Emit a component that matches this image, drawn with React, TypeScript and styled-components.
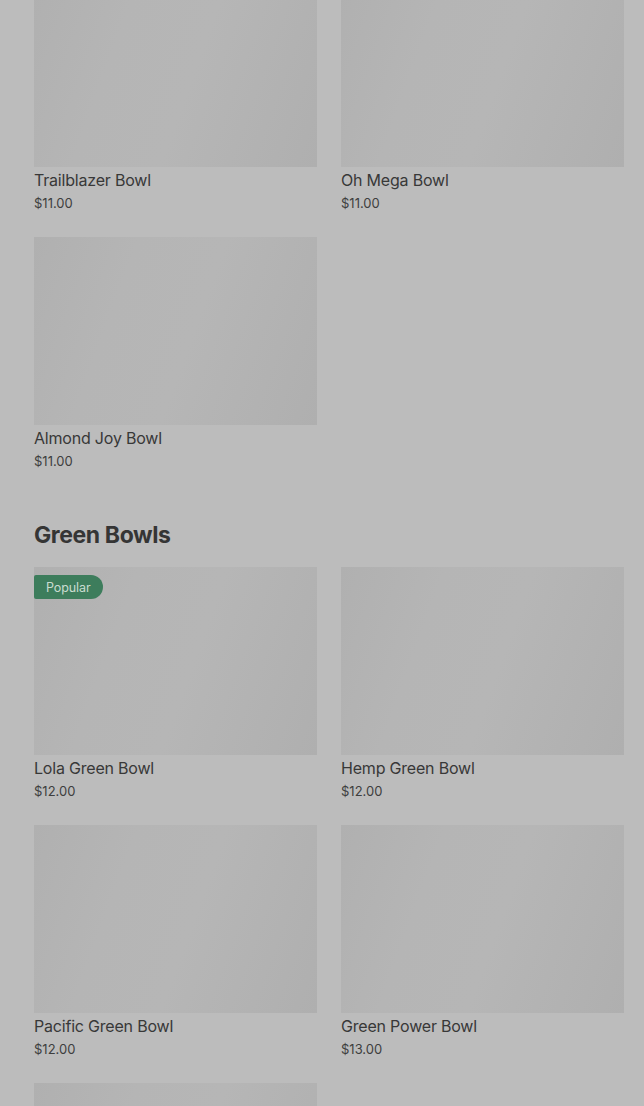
import React from "react";
import styled, { createGlobalStyle } from "styled-components";

const GlobalStyle = createGlobalStyle`
  html, body {
    margin: 0;
    padding: 0;
    background: #bcbcbc;
    overflow: hidden;
  }
  body {
    font-family: Inter, "Noto Sans", Arial, sans-serif;
    color: #383838;
  }
`;

const Page = styled.div`
  margin-top: -21px;
  padding: 0 20px 0 34px;
  display: flex;
  flex-direction: column;
  gap: 50px;
`;

const Section = styled.section`
  display: flex;
  flex-direction: column;
`;

const Heading = styled.h2`
  margin: 0 0 17px;
  font-size: 23px;
  line-height: 30px;
  font-weight: 700;
  color: #353535;
  letter-spacing: -0.4px;
`;

const Grid = styled.div`
  display: grid;
  grid-template-columns: 283px 283px;
  column-gap: 24px;
  row-gap: 25px;
`;

const Card = styled.div`
  display: flex;
  flex-direction: column;
`;

const Thumb = styled.div`
  position: relative;
  height: 188px;
  background: linear-gradient(
    110deg,
    #b0b0b0 0%,
    #b5b5b5 30%,
    #b6b6b6 55%,
    #afafaf 100%
  );
`;

const Badge = styled.span`
  position: absolute;
  top: 8px;
  left: 0;
  height: 24px;
  padding: 0 12px;
  display: flex;
  align-items: center;
  background: #3d7d5c;
  color: #c9dcd0;
  font-size: 12.5px;
  letter-spacing: -0.1px;
  border-radius: 2px 12px 12px 2px;
`;

const Title = styled.div`
  margin-top: 3px;
  font-size: 16px;
  line-height: 20px;
  letter-spacing: -0.2px;
  color: #383838;
`;

const Price = styled.div`
  margin-top: 4px;
  font-size: 13px;
  line-height: 18px;
  color: #3e3e3e;
`;

type Item = { name?: string; price?: string; badge?: string };

const sections: { title?: string; items: Item[] }[] = [
  {
    items: [
      { name: "Trailblazer Bowl", price: "$11.00" },
      { name: "Oh Mega Bowl", price: "$11.00" },
      { name: "Almond Joy Bowl", price: "$11.00" },
    ],
  },
  {
    title: "Green Bowls",
    items: [
      { name: "Lola Green Bowl", price: "$12.00", badge: "Popular" },
      { name: "Hemp Green Bowl", price: "$12.00" },
      { name: "Pacific Green Bowl", price: "$12.00" },
      { name: "Green Power Bowl", price: "$13.00" },
      {},
    ],
  },
];

export default function App() {
  return (
    <>
      <GlobalStyle />
      <Page>
        {sections.map((s, i) => (
          <Section key={i}>
            {s.title && <Heading>{s.title}</Heading>}
            <Grid>
              {s.items.map((it, j) => (
                <Card key={j}>
                  <Thumb>{it.badge && <Badge>{it.badge}</Badge>}</Thumb>
                  {it.name && <Title>{it.name}</Title>}
                  {it.price && <Price>{it.price}</Price>}
                </Card>
              ))}
            </Grid>
          </Section>
        ))}
      </Page>
    </>
  );
}
